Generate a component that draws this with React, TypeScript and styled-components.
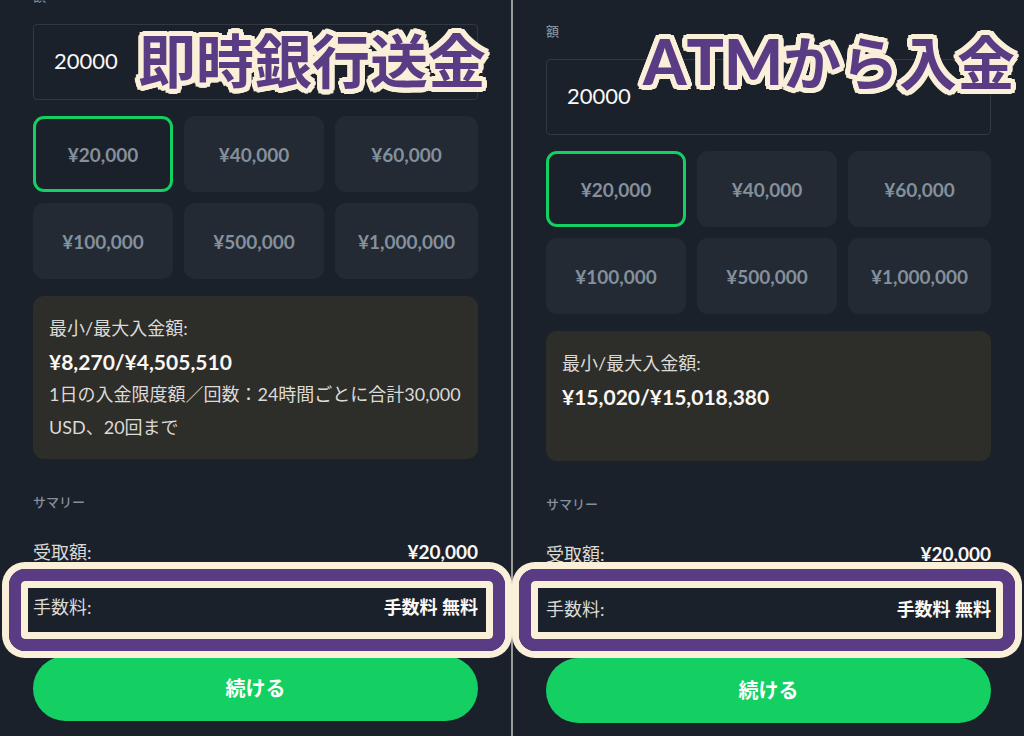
import React, { useState } from "react";
import styled, { createGlobalStyle } from "styled-components";

const color = {
  bg: "#1a212a",
  tile: "#232a34",
  note: "#2d2d29",
  line: "#32383f",
  muted: "#84909b",
  text: "#dcdad7",
  strong: "#faf7f5",
  green: "#14d063",
  purple: "#5a3c85",
  cream: "#faefd9",
  divider: "#9b9c9e",
};

const GlobalStyle = createGlobalStyle`
  *, *::before, *::after { box-sizing: border-box; }
  body {
    margin: 0;
    background: ${color.bg};
    color: ${color.text};
    font-family: Lato, "Noto Sans CJK JP", sans-serif;
    font-size: 18px;
  }
  button, input { font: inherit; }
`;

const Page = styled.main`
  display: grid;
  grid-template-columns: 1fr 2px 1fr;
  height: 100vh;
  overflow: hidden;
`;

const Divider = styled.div`
  background: ${color.divider};
`;

const Panel = styled.section`
  position: relative;
  min-width: 0;
`;

const Form = styled.form<{ $top: number }>`
  display: flex;
  flex-direction: column;
  margin-top: ${(p) => p.$top}px;
  padding: 0 33px;
`;

const FieldLabel = styled.label`
  margin-bottom: 20px;
  color: ${color.muted};
  font-size: 13px;
  font-weight: 500;
  line-height: 16px;
`;

const AmountInput = styled.input`
  width: 100%;
  height: 76px;
  margin-bottom: 16px;
  padding: 0 20px 4px;
  border: 1px solid ${color.line};
  border-radius: 4px;
  background: transparent;
  color: ${color.strong};
  font-size: 22px;
  outline: none;
`;

const Presets = styled.div`
  display: grid;
  grid-template-columns: 140fr 140fr 143fr;
  gap: 11px;
  margin-bottom: 17px;
`;

const Preset = styled.button<{ $active: boolean }>`
  height: 76px;
  padding: 0;
  border: 3px solid ${(p) => (p.$active ? color.green : "transparent")};
  border-radius: 11px;
  background: ${(p) => (p.$active ? color.bg : color.tile)};
  color: ${color.muted};
  font-size: 19px;
  font-weight: 700;
  font-kerning: none;
`;

const Note = styled.div`
  margin-bottom: 35px;
  padding: 16px 16px 15px;
  border-radius: 11px;
  background: ${color.note};
  line-height: 33px;

  p { margin: 0; min-height: 33px; }
  strong {
    display: block;
    color: ${color.strong};
    font-size: 21px;
    font-weight: 700;
  }
`;

const SummaryTitle = styled.h2`
  margin: 0 0 30px;
  color: ${color.muted};
  font-size: 13px;
  font-weight: 500;
  line-height: 16px;
`;

const Summary = styled.dl`
  display: flex;
  flex-direction: column;
  gap: 31px;
  margin: 0 0 37px;
`;

const SummaryRow = styled.div`
  display: flex;
  justify-content: space-between;
  line-height: 24px;

  dd { margin: 0; color: ${color.strong}; font-weight: 700; }
`;

const Price = styled.span`
  font-size: 19px;
  font-kerning: none;
`;

const Submit = styled.button`
  height: 65px;
  padding: 0 0 3px;
  border: 0;
  border-radius: 33px;
  background: ${color.green};
  color: #fff;
  font-size: 20px;
  font-weight: 700;
`;

/* Round outline: the glyph shadow repeated on two rings. */
const ring = (radius: number) =>
  Array.from({ length: 24 }, (_, i) => {
    const a = (i * Math.PI) / 12;
    const x = Math.round(Math.cos(a) * radius);
    const y = Math.round(Math.sin(a) * radius);
    return `${x}px ${y}px 0 ${color.cream}`;
  });

const outline = [...ring(5), ...ring(3)].join(", ");

const Caption = styled.h1<{ $right: number }>`
  position: absolute;
  top: 32px;
  right: ${(p) => p.$right}px;
  margin: 0;
  color: ${color.purple};
  font-size: 58px;
  font-weight: 700;
  line-height: 58px;
  white-space: nowrap;
  text-shadow: ${outline};
  pointer-events: none;
`;

const Latin = styled.span`
  font-size: 62px;
  font-weight: 900;
  font-kerning: none;
`;

const Highlight = styled.div<{ $left: number; $right: number }>`
  position: absolute;
  top: 569px;
  left: ${(p) => p.$left}px;
  right: ${(p) => p.$right}px;
  height: 82px;
  border: 12px solid ${color.purple};
  border-radius: 16px;
  box-shadow: 0 0 0 7px ${color.cream}, inset 0 0 0 7px ${color.cream};
  pointer-events: none;
`;

const AMOUNTS = [20000, 40000, 60000, 100000, 500000, 1000000];
const yen = (n: number) => "¥" + n.toLocaleString("en-US");

interface DepositProps {
  id: string;
  top: number;
  range: string;
  limit?: string;
}

function DepositForm({ id, top, range, limit }: DepositProps) {
  const [amount, setAmount] = useState("20000");
  return (
    <Form $top={top} onSubmit={(e) => e.preventDefault()}>
      <FieldLabel htmlFor={id}>額</FieldLabel>
      <AmountInput
        id={id}
        type="text"
        inputMode="numeric"
        value={amount}
        onChange={(e) => setAmount(e.target.value)}
      />
      <Presets>
        {AMOUNTS.map((n) => (
          <Preset
            key={n}
            type="button"
            $active={String(n) === amount}
            onClick={() => setAmount(String(n))}
          >
            {yen(n)}
          </Preset>
        ))}
      </Presets>
      <Note>
        <p>最小/最大入金額:</p>
        <strong>{range}</strong>
        <p>{limit}</p>
      </Note>
      <SummaryTitle>サマリー</SummaryTitle>
      <Summary>
        <SummaryRow>
          <dt>受取額:</dt>
          <dd>
            <Price>{yen(Number(amount) || 0)}</Price>
          </dd>
        </SummaryRow>
        <SummaryRow>
          <dt>手数料:</dt>
          <dd>手数料 無料</dd>
        </SummaryRow>
      </Summary>
      <Submit type="submit">続ける</Submit>
    </Form>
  );
}

export default function App() {
  return (
    <>
      <GlobalStyle />
      <Page lang="ja">
        <Panel>
          <DepositForm
            id="bank-amount"
            top={-12}
            range="¥8,270/¥4,505,510"
            limit="1日の入金限度額／回数：24時間ごとに合計30,000 USD、20回まで"
          />
          <Caption $right={25}>即時銀行送金</Caption>
          <Highlight $left={9} $right={6} />
        </Panel>
        <Divider />
        <Panel>
          <DepositForm id="atm-amount" top={23} range="¥15,020/¥15,018,380" />
          <Caption $right={9}>
            <Latin>ATM</Latin>から入金
          </Caption>
          <Highlight $left={6} $right={9} />
        </Panel>
      </Page>
    </>
  );
}
